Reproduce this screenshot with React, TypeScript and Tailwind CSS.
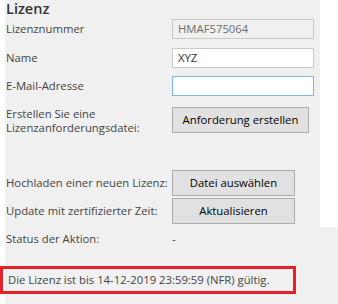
import React from "react";

const font = { fontFamily: "'Open Sans', 'Noto Sans', sans-serif" };

function Btn({ children, w }: { children: React.ReactNode; w: string }) {
  return (
    <div
      className={`flex h-[26px] shrink-0 items-center justify-center border border-[#adadad] bg-[#e1e1e1] text-[11.3px] text-[#000] ${w}`}
    >
      {children}
    </div>
  );
}

export default function App() {
  return (
    <div className="h-[304px] w-[338px] overflow-hidden bg-white pl-[5px]" style={font}>
      <div className="flex h-[227px] w-[315px] flex-col bg-[#f0f0f0] pl-px">
        <div className="h-[19px] shrink-0 text-[14.5px] font-semibold leading-[17px] text-[#333]">Lizenz</div>
        <div className="flex h-[20px] shrink-0 items-center">
          <div className="w-[166px] whitespace-nowrap text-[11.3px] text-[#444]">Lizenznummer</div>
          <div className="flex h-[20px] w-[142px] items-center border border-[#c8c8c8] bg-[#f0f0f0] px-[5px] text-[11.3px] text-[#6d6d6d]">
            HMAF575064
          </div>
        </div>
        <div className="mt-[9px] flex h-[20px] shrink-0 items-center">
          <div className="w-[166px] whitespace-nowrap text-[11.3px] text-[#444]">Name</div>
          <div className="flex h-[20px] w-[142px] items-center border border-[#c8c8c8] bg-white px-[5px] text-[11.3px] text-[#333]">
            XYZ
          </div>
        </div>
        <div className="mt-[8px] flex h-[20px] shrink-0 items-center">
          <div className="w-[166px] whitespace-nowrap text-[11.3px] text-[#444]">E-Mail-Adresse</div>
          <div className="h-[20px] w-[142px] border border-[#7eb4ea] bg-white" />
        </div>
        <div className="mt-[11px] flex shrink-0 items-start">
          <div className="w-[166px] whitespace-nowrap text-[11.3px] leading-[14px] text-[#444]">
            Erstellen Sie eine
            <br />
            Lizenzanforderungsdatei:
          </div>
          <Btn w="w-[137px]">Anforderung erstellen</Btn>
        </div>
        <div className="mt-[35px] flex shrink-0 items-center">
          <div className="w-[166px] whitespace-nowrap text-[11.3px] text-[#444]">Hochladen einer neuen Lizenz:</div>
          <Btn w="w-[123px]">Datei auswählen</Btn>
        </div>
        <div className="mt-[2px] flex shrink-0 items-center">
          <div className="w-[166px] whitespace-nowrap text-[11.3px] text-[#444]">Update mit zertifizierter Zeit:</div>
          <Btn w="w-[123px]">Aktualisieren</Btn>
        </div>
      </div>
      <div className="flex h-[77px] flex-col bg-[#f0f0f0] pl-px">
        <div className="mt-[4px] flex h-[16px] shrink-0 items-center">
          <div className="w-[166px] whitespace-nowrap text-[11.3px] text-[#444]">Status der Aktion:</div>
          <div className="text-[11.3px] text-[#444]">-</div>
        </div>
        <div className="-ml-[6px] mt-[19px] flex h-[28px] w-[296px] shrink-0 items-center whitespace-nowrap border-[3px] border-[#e8202a] pl-[5px] text-[11.3px] text-[#444]">
          Die Lizenz ist bis 14-12-2019 23:59:59 (NFR) gültig.
        </div>
      </div>
    </div>
  );
}
